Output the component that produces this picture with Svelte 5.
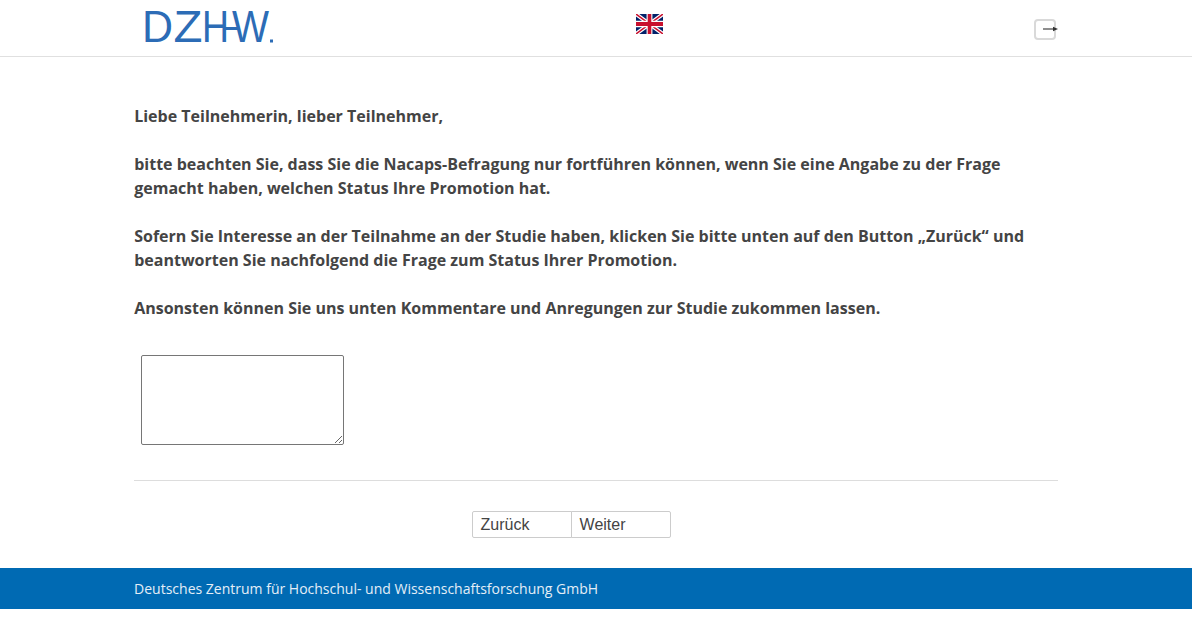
<script>
  const paragraphs = [
    ['Liebe Teilnehmerin, lieber Teilnehmer,'],
    ['bitte beachten Sie, dass Sie die Nacaps-Befragung nur fortführen können, wenn Sie eine Angabe zu der Frage', 'gemacht haben, welchen Status Ihre Promotion hat.'],
    ['Sofern Sie Interesse an der Teilnahme an der Studie haben, klicken Sie bitte unten auf den Button „Zurück“ und', 'beantworten Sie nachfolgend die Frage zum Status Ihrer Promotion.'],
    ['Ansonsten können Sie uns unten Kommentare und Anregungen zur Studie zukommen lassen.']
  ];
</script>

<header class="header">
  <div class="bar">
    <svg class="logo" viewBox="0 0 150 56" width="150" height="56" aria-label="DZHW">
      <g class="logo-letters">
        <text x="8" y="42" textLength="31" lengthAdjust="spacingAndGlyphs">D</text>
        <text x="39.5" y="42" textLength="29" lengthAdjust="spacingAndGlyphs">Z</text>
        <text x="68" y="42" textLength="27" lengthAdjust="spacingAndGlyphs">H</text>
        <text x="98" y="42" textLength="37" lengthAdjust="spacingAndGlyphs">W</text>
      </g>
      <rect x="90" y="27" width="14" height="3" fill="#2c6cb6" />
      <rect x="136" y="39.5" width="3" height="3" fill="#2c6cb6" />
    </svg>
    <svg class="flag" viewBox="0 0 60 40" width="27" height="20" preserveAspectRatio="none" aria-label="English">
      <rect width="60" height="40" fill="#012169" />
      <path d="M0 0L60 40M60 0L0 40" stroke="#fff" stroke-width="8" />
      <path d="M0 0L60 40M60 0L0 40" stroke="#c8102e" stroke-width="3" />
      <path d="M30 0V40M0 20H60" stroke="#fff" stroke-width="13" />
      <path d="M30 0V40M0 20H60" stroke="#c8102e" stroke-width="8" />
    </svg>
    <button class="logout" aria-label="Abmelden">
      <svg viewBox="0 0 16 6" width="16" height="6"><path d="M0 3H11" stroke="#444" stroke-width="1.2" /><path d="M10 .8L15 3L10 5.2Z" fill="#333" /></svg>
    </button>
  </div>
</header>

<main class="main">
  <div class="copy">
    {#each paragraphs as lines}
      <p>{#each lines as line}<span>{line}</span>{/each}</p>
    {/each}
  </div>
  <div class="field"><textarea aria-label="Kommentar"></textarea></div>
  <hr />
  <nav class="nav">
    <button>Zurück</button>
    <button>Weiter</button>
  </nav>
</main>

<footer class="footer">
  <div class="footer-inner">Deutsches Zentrum für Hochschul- und Wissenschaftsforschung GmbH</div>
</footer>

<style>
  :global(body) {
    margin: 0;
    background: #fff;
    font-family: "Open Sans", sans-serif;
    color: #444;
  }
  .header {
    height: 56px;
    border-bottom: 1px solid #e0e0e0;
  }
  .bar {
    width: 924px;
    height: 56px;
    margin: 0 auto;
    display: flex;
    align-items: flex-start;
  }
  .logo {
    display: block;
    flex: none;
  }
  .logo-letters {
    font-family: "Liberation Sans", sans-serif;
    font-size: 44px;
    fill: #2c6cb6;
  }
  .flag {
    display: block;
    flex: none;
    margin-top: 14px;
    margin-left: 352px;
  }
  .logout {
    margin-left: auto;
    margin-top: 19px;
    margin-right: 2px;
    width: 22px;
    height: 21px;
    padding: 0;
    background: #fff;
    border: 2px solid #d9d9d9;
    border-radius: 4px;
    position: relative;
  }
  .logout svg {
    position: absolute;
    left: 7px;
    top: 5px;
  }
  .main {
    width: 924px;
    margin: 0 auto;
    padding-top: 47px;
  }
  .copy {
    padding-left: 0.2px;
  }
  .copy p {
    margin: 0 0 24px;
    font-size: 16px;
    font-weight: 700;
    line-height: 24px;
  }
  .copy span {
    display: block;
    white-space: nowrap;
  }
  .field {
    padding: 11px 0 0 7px;
    height: 90px;
  }
  textarea {
    display: block;
    box-sizing: border-box;
    width: 203px;
    height: 90px;
    margin: 0;
    padding: 2px;
    background: #fff;
    border: 1px solid #767676;
    border-radius: 2px;
  }
  hr {
    margin: 35px 0 0;
    border: 0;
    border-top: 1px solid #ddd;
  }
  .nav {
    margin-top: 30px;
    padding-left: 338px;
    display: flex;
  }
  .nav button {
    box-sizing: border-box;
    width: 100px;
    height: 27px;
    padding: 0 7.6px;
    text-align: left;
    font-family: "Liberation Sans", sans-serif;
    font-size: 16px;
    color: #444;
    background: #fff;
    border: 1px solid #ccc;
  }
  .nav button:first-child {
    border-radius: 2px 0 0 2px;
  }
  .nav button:last-child {
    margin-left: -1px;
    border-radius: 0 2px 2px 0;
  }
  .footer {
    margin-top: 30px;
    height: 41px;
    background: #006ab3;
    color: #e4eef7;
  }
  .footer-inner {
    width: 924px;
    margin: 0 auto;
    padding-left: 0.2px;
    font-size: 14px;
    line-height: 41px;
  }
</style>
